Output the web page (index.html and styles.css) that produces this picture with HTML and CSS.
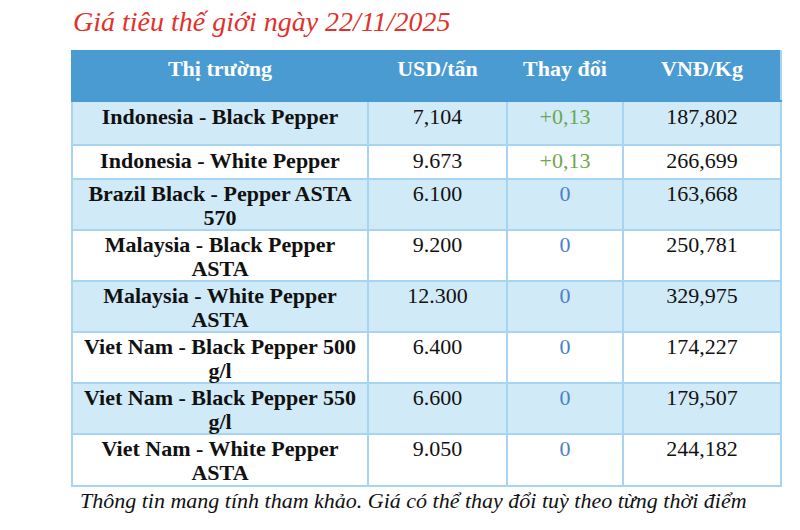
FILE: index.html
```html
<!DOCTYPE html>
<html lang="vi">
<head>
<meta charset="utf-8">
<link rel="stylesheet" href="styles.css">
</head>
<body>
<div class="page">
  <h1 class="title">Giá tiêu thế giới ngày 22/11/2025</h1>
  <table class="prices">
    <colgroup>
      <col class="c1"><col class="c2"><col class="c3"><col class="c4">
    </colgroup>
    <thead>
      <tr class="head"><th>Thị trường</th><th>USD/tấn</th><th>Thay đổi</th><th>VNĐ/Kg</th></tr>
    </thead>
    <tbody>
      <tr class="blue r43"><td class="name">Indonesia - Black Pepper</td><td>7,104</td><td class="up">+0,13</td><td>187,802</td></tr>
      <tr class="r34"><td class="name">Indonesia - White Pepper</td><td>9.673</td><td class="up">+0,13</td><td>266,699</td></tr>
      <tr class="blue r51"><td class="name">Brazil Black - Pepper ASTA 570</td><td>6.100</td><td class="zero">0</td><td>163,668</td></tr>
      <tr class="r51"><td class="name">Malaysia - Black Pepper ASTA</td><td>9.200</td><td class="zero">0</td><td>250,781</td></tr>
      <tr class="blue r51"><td class="name">Malaysia - White Pepper ASTA</td><td>12.300</td><td class="zero">0</td><td>329,975</td></tr>
      <tr class="r51"><td class="name">Viet Nam - Black Pepper 500 g/l</td><td>6.400</td><td class="zero">0</td><td>174,227</td></tr>
      <tr class="blue r51"><td class="name">Viet Nam - Black Pepper 550 g/l</td><td>6.600</td><td class="zero">0</td><td>179,507</td></tr>
      <tr class="r52"><td class="name">Viet Nam - White Pepper ASTA</td><td>9.050</td><td class="zero">0</td><td>244,182</td></tr>
    </tbody>
  </table>
  <p class="note">Thông tin mang tính tham khảo. Giá có thể thay đổi tuỳ theo từng thời điểm</p>
</div>
</body>
</html>
```
FILE: styles.css
```css
html, body {
  margin: 0;
  padding: 0;
  background: #ffffff;
}
.page {
  width: 800px;
  height: 530px;
  padding: 5px 0 0 71px;
  box-sizing: border-box;
  font-family: "Liberation Serif", "Times New Roman", serif;
  color: #111111;
}
.title {
  margin: 0 0 0 2px;
  font-size: 28px;
  font-weight: normal;
  font-style: italic;
  color: #e2312a;
  line-height: 34px;
  height: 45px;
}
.prices {
  border-collapse: collapse;
  table-layout: fixed;
  width: 709px;
  font-size: 22px;
  line-height: 23.5px;
}
.c1 { width: 296px; }
.c2 { width: 139px; }
.c3 { width: 116px; }
.c4 { width: 158px; }
.prices th, .prices td {
  border: 2px solid #a6d4f2;
  text-align: center;
  vertical-align: top;
  padding: 3px 4px 0;
}
.head th {
  background: #4a9bd2;
  color: #ffffff;
  font-weight: bold;
  height: 50px;
  padding-top: 5px;
  border-color: #4a9bd2;
  box-sizing: border-box;
}
.head th:last-child { border-right-color: #a6d4f2; }
.prices td { font-weight: normal; }
.prices td.name { font-weight: bold; padding-left: 2px; padding-right: 2px; }
.blue td { background: #d1eaf8; }
.r43 td { height: 39px; }
.r34 td { height: 29px; }
.r51 td { height: 47px; padding-top: 2px; }
.r52 td { height: 48px; padding-top: 2px; }
.up { color: #6aa84f; }
.zero { color: #4a7fcc; }
.note {
  margin: 1px 0 0 9px;
  font-style: italic;
  font-size: 22px;
  line-height: 26px;
  color: #111111;
}
```
